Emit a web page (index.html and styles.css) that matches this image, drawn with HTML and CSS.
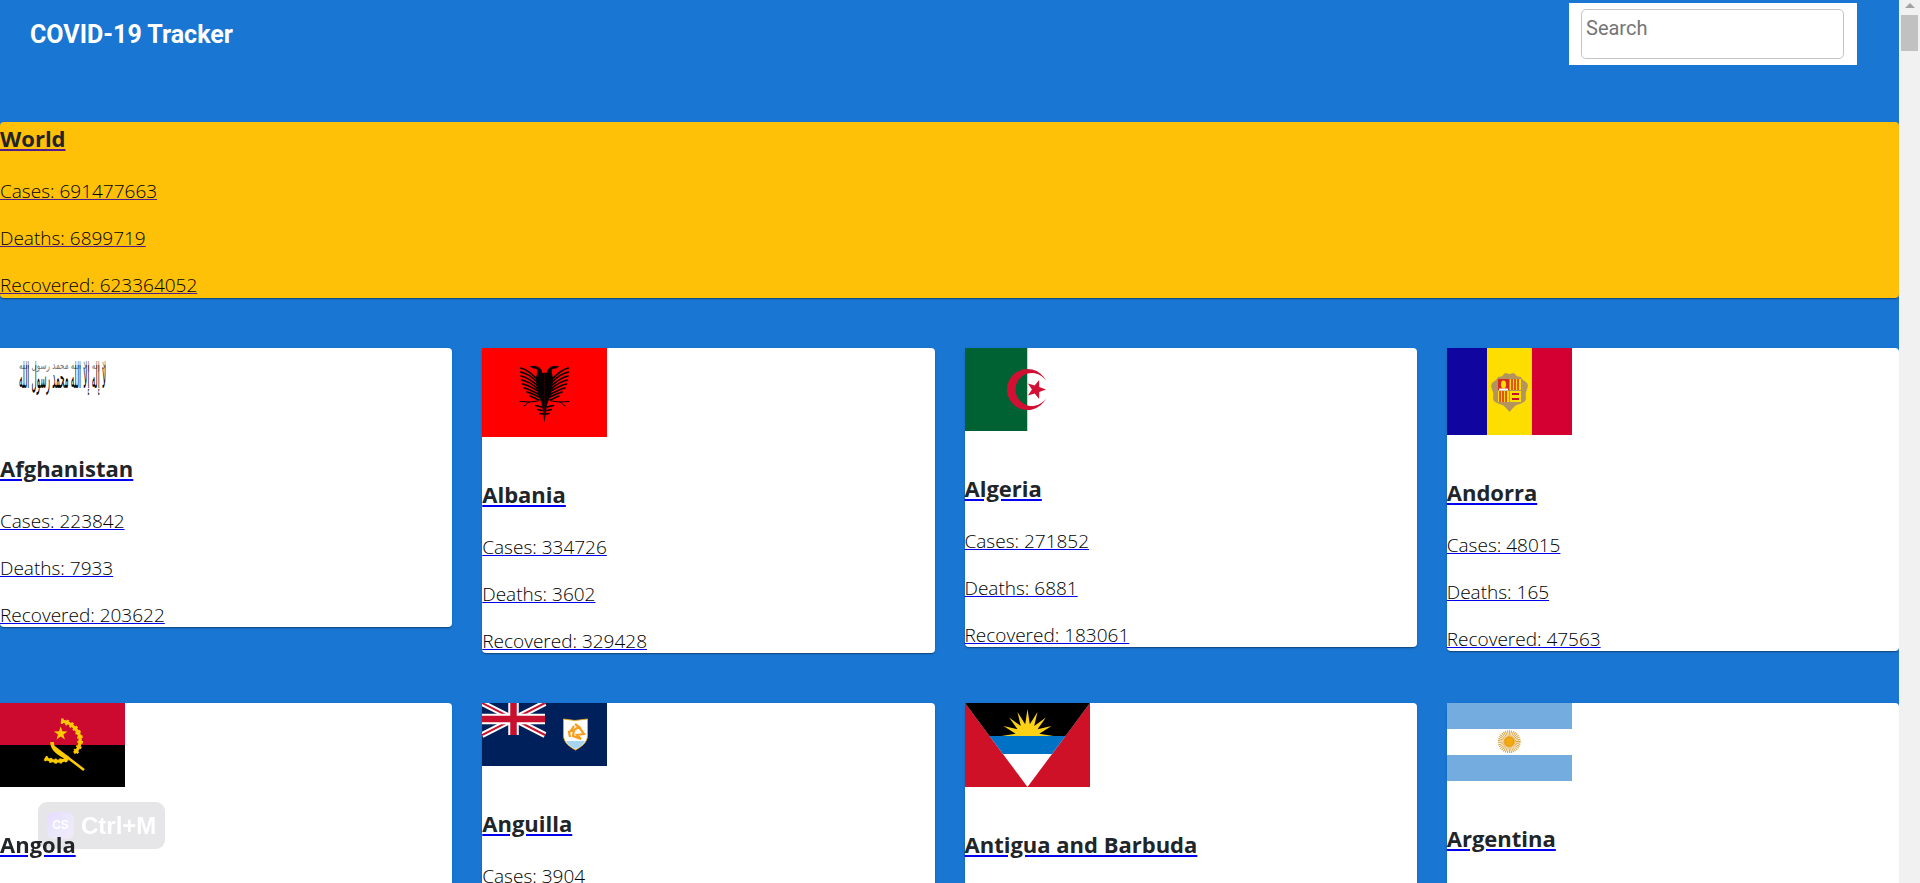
FILE: index.html
```html
<!DOCTYPE html>
<html lang="en">
<head>
<meta charset="utf-8">
<title>COVID-19 Tracker</title>
<link rel="stylesheet" href="styles.css">
</head>
<body>
<div class="app">
<main class="page">
  <header class="topbar">
    <h1 class="brand">COVID-19 Tracker</h1>
    <div class="search-box"><input class="search-input" type="text" placeholder="Search"></div>
  </header>

  <a class="card world" href="#world">
    <h3 class="name">World</h3>
    <p class="stat">Cases: 691477663</p>
    <p class="stat">Deaths: 6899719</p>
    <p class="stat">Recovered: 623364052</p>
  </a>

  <section class="grid">
    <a class="card" href="#af">
      <svg class="flag" viewBox="0 0 125 62.5" width="125" height="62.5"><rect width="125" height="62.5" fill="#fff"/><text class="shahada-small" x="19" y="21" textLength="87" lengthAdjust="spacingAndGlyphs">لا إله إلا الله محمد رسول الله</text><text class="shahada" x="19" y="40" textLength="87" lengthAdjust="spacingAndGlyphs">لا إله إلا الله محمد رسول الله</text></svg>
      <h3 class="name">Afghanistan</h3>
      <p class="stat">Cases: 223842</p>
      <p class="stat">Deaths: 7933</p>
      <p class="stat">Recovered: 203622</p>
    </a>

    <a class="card" href="#al">
      <svg class="flag" viewBox="0 0 125 89" width="125" height="89">
        <rect width="125" height="89" fill="#f00"/>
        <g id="eagle-half" fill="#000" stroke="#000" stroke-linecap="round">
          <path d="M62.5 25 L60 25 C60 21 57 18.5 52 18 L48 18.5 L50.5 20 L55 21 C56 24 55 27 54 30 L56 46 L60 56 L62.5 73 Z" stroke-width="0.3"/>
          <path d="M55 31 C50 26 44 21 38.5 20" stroke-width="1.7" fill="none"/>
          <path d="M55 34 C50 29 44 25 38.5 24" stroke-width="1.7" fill="none"/>
          <path d="M55 37 C50 33 44 29 39 28" stroke-width="1.7" fill="none"/>
          <path d="M55 40 C50 36 45 33 39.5 32" stroke-width="1.7" fill="none"/>
          <path d="M56 43 C51 40 46 37 40.5 36" stroke-width="1.7" fill="none"/>
          <path d="M56 46 C52 44 47 41 42 40" stroke-width="1.7" fill="none"/>
          <path d="M57 49 C53 47 49 45 45 44" stroke-width="1.7" fill="none"/>
          <path d="M57 52 C54 51 51 49 48 48" stroke-width="1.5" fill="none"/>
          <path d="M56 53 L48 54 L38 53.5" stroke-width="1" fill="none"/>
          <path d="M47 54 L42 58" stroke-width="1" fill="none"/>
          <path d="M60 59 L53.5 57.5" stroke-width="1.4" fill="none"/>
          <path d="M60 62.5 L55.5 61.5" stroke-width="1.4" fill="none"/>
          <path d="M61 66 L58 65.5" stroke-width="1.4" fill="none"/>
        </g>
        <use href="#eagle-half" transform="matrix(-1 0 0 1 125 0)"/>
      </svg>
      <h3 class="name">Albania</h3>
      <p class="stat">Cases: 334726</p>
      <p class="stat">Deaths: 3602</p>
      <p class="stat">Recovered: 329428</p>
    </a>

    <a class="card" href="#dz">
      <svg class="flag" viewBox="0 0 125 83" width="125" height="83">
        <rect width="62.5" height="83" fill="#006233"/>
        <rect x="62.5" width="62.5" height="83" fill="#fff"/>
        <path d="M81.19 33.08A20.5 20.5 0 1 0 81.19 49.92A16.5 16.5 0 1 1 81.19 33.08Z" fill="#d21034"/>
        <path d="M81 41.5L74.3 43.9L74.1 51L69.7 45.4L62.9 47.4L66.9 41.5L62.9 35.6L69.7 37.6L74.1 32L74.3 39.1Z" fill="#d21034"/>
      </svg>
      <h3 class="name">Algeria</h3>
      <p class="stat">Cases: 271852</p>
      <p class="stat">Deaths: 6881</p>
      <p class="stat">Recovered: 183061</p>
    </a>

    <a class="card" href="#ad">
      <svg class="flag" viewBox="0 0 125 87" width="125" height="87">
        <rect width="40" height="87" fill="#10069f"/>
        <rect x="40" width="45" height="87" fill="#fedd00"/>
        <rect x="85" width="40" height="87" fill="#d50032"/>
        <path d="M51 29C54 29 56 28 57 26C59 24 60 26 62.5 26C65 26 66 24 68 26C69 28 71 29 74 29C75 32 78 33 80 35C82 38 80 41 79 44C78 47 80 50 78 53C75 56 71 56 68 58C66 60 64 62 62.5 64C61 62 59 60 57 58C54 56 50 56 47 53C45 50 47 47 46 44C45 41 43 38 45 35C47 33 50 32 51 29Z" fill="#b3945f"/>
        <rect x="51" y="31" width="11" height="11" fill="#d52b1e"/>
        <ellipse cx="56.5" cy="36.5" rx="2.6" ry="4" fill="#fedd00"/>
        <rect x="52" y="40.5" width="9" height="2" fill="#fff"/>
        <rect x="63" y="31" width="11" height="11" fill="#fedd00"/>
        <path d="M65 31V42M68 31V42M71 31V42" stroke="#d52b1e" stroke-width="1.5"/>
        <rect x="51" y="43" width="11" height="11" fill="#fedd00"/>
        <path d="M53 43V54M56 43V54M59 43V54" stroke="#d52b1e" stroke-width="1.5"/>
        <rect x="63" y="43" width="11" height="11" fill="#fedd00"/>
        <path d="M65 46H72M65 51H72" stroke="#c8102e" stroke-width="2.2"/>
      </svg>
      <h3 class="name">Andorra</h3>
      <p class="stat">Cases: 48015</p>
      <p class="stat">Deaths: 165</p>
      <p class="stat">Recovered: 47563</p>
    </a>

    <a class="card open" href="#ao">
      <svg class="flag" viewBox="0 0 125 84" width="125" height="84">
        <rect width="125" height="42" fill="#cc092f"/>
        <rect y="42" width="125" height="42" fill="#000"/>
        <path d="M61 18C72 19 82 30 80 40C79 45 77 48 74 50" fill="none" stroke="#ffcb00" stroke-width="3.2"/>
        <path d="M61 18C72 19 82 30 80 40C79 45 77 48 74 50" fill="none" stroke="#ffcb00" stroke-width="5.6" stroke-dasharray="2.4 2.6"/>
        <path d="M45 55C52 59 60 59 68 56" fill="none" stroke="#ffcb00" stroke-width="3"/>
        <path d="M45 55C52 59 60 59 68 56" fill="none" stroke="#ffcb00" stroke-width="5" stroke-dasharray="2.4 2.6"/>
        <path d="M52 39C52 45 58 51 68 55" fill="none" stroke="#ffcb00" stroke-width="3.6"/>
        <path d="M54 44L84 67" stroke="#ffcb00" stroke-width="2.6"/>
        <path d="M60.7 23.5L62.4 28.3L67.5 28.4L63.4 31.5L64.9 36.4L60.7 33.5L56.5 36.4L58 31.5L53.9 28.4L59 28.3Z" fill="#ffcb00"/>
      </svg>
      <h3 class="name">Angola</h3>
    </a>

    <a class="card open" href="#ai">
      <svg class="flag" viewBox="0 0 125 63" width="125" height="63">
        <rect width="125" height="63" fill="#00205b"/>
        <path d="M0 0L63 32M63 0L0 32" stroke="#fff" stroke-width="6"/>
        <path d="M0 0L63 32M63 0L0 32" stroke="#c8102e" stroke-width="2"/>
        <path d="M31.5 0V32M0 16H63" stroke="#fff" stroke-width="10.5"/>
        <path d="M31.5 0V32M0 16H63" stroke="#c8102e" stroke-width="6.5"/>
        <path d="M81.5 16L93 17.5L105.5 16L105.5 33C105 40 99 44 93.5 47C88 44 82 40 81.5 33Z" fill="#fff" stroke="#e6a817" stroke-width="0.9"/>
        <path d="M84 38H103C101 42 97 44.5 93.5 46C90 44.5 86 42 84 38Z" fill="#a6d4f5"/>
        <path d="M93 21L97 24L92 27L87 29L88 34M97 24L102 31L95 32L99 36L91 33L92 27M88 29L92 23" fill="none" stroke="#f99d1c" stroke-width="2.2"/>
      </svg>
      <h3 class="name">Anguilla</h3>
      <p class="stat">Cases: 3904</p>
    </a>

    <a class="card open" href="#ag">
      <svg class="flag" viewBox="0 0 125 84" width="125" height="84">
        <rect width="125" height="84" fill="#ce1126"/>
        <path d="M0 0H125L62.5 84Z" fill="#fff"/>
        <path d="M0 0H125L100.5 33H24.5Z" fill="#000"/>
        <path d="M24.5 33H100.5L87 51H38Z" fill="#0072c6"/>
        <path d="M88.5 33L74.3 30.7L86.5 23L72.5 26.3L80.9 14.6L69.2 23L72.5 9L64.8 21.2L62.5 6L60.2 21.2L52.5 9L55.8 23L44.1 14.6L52.5 26.3L38.5 23L50.7 30.7L36.5 33Z" fill="#fcd116"/>
      </svg>
      <h3 class="name">Antigua and Barbuda</h3>
    </a>

    <a class="card open" href="#ar">
      <svg class="flag" viewBox="0 0 125 78" width="125" height="78">
        <rect width="125" height="78" fill="#74acdf"/>
        <rect y="26" width="125" height="26" fill="#fff"/>
        <circle cx="62.3" cy="38.7" r="8.6" fill="none" stroke="#d9a441" stroke-width="5.6" stroke-dasharray="0.9 0.7"/>
        <circle cx="62.3" cy="38.7" r="6" fill="#f0b544"/>
        <circle cx="62.3" cy="38.7" r="4.4" fill="#f6a90e" stroke="#c98412" stroke-width="0.5"/>
      </svg>
      <h3 class="name">Argentina</h3>
    </a>
  </section>
</main>

<aside class="scrollbar" aria-hidden="true">
  <span class="scroll-up"></span>
  <span class="scroll-thumb"></span>
</aside>
</div>

<div class="shortcut">
  <span class="shortcut-icon">CS</span>
  <span class="shortcut-text">Ctrl+M</span>
</div>
</body>
</html>
```

FILE: styles.css
```css
* { box-sizing: border-box; }

html, body {
  margin: 0;
  height: 100%;
  overflow: hidden;
}

body {
  background: #1976d2;
  font-family: "Open Sans", "Noto Sans", sans-serif;
  color: #212529;
}

.app {
  display: flex;
  height: 100vh;
}

.page {
  flex: 1;
  min-width: 0;
  overflow: hidden;
}

.topbar {
  display: flex;
  justify-content: space-between;
  align-items: flex-start;
  height: 122px;
  padding: 3px 42px 0 30px;
}

.brand {
  margin: 14px 0 0;
  font-family: Roboto, sans-serif;
  font-size: 25px;
  font-weight: 700;
  line-height: 35px;
  color: #fff;
}

.search-box {
  width: 288px;
  height: 62px;
  padding: 6px 13px 6px 12px;
  background: #fff;
}

.search-input {
  display: block;
  width: 100%;
  height: 50px;
  padding: 0 4px 13px;
  border: 1px solid #c4c4c4;
  border-radius: 5px;
  font-family: Roboto, sans-serif;
  font-size: 20px;
  outline: none;
}

.search-input::placeholder {
  color: #757575;
  opacity: 1;
}

.card {
  display: block;
  background: #fff;
  border-radius: 4px;
  color: #00e;
  box-shadow: 0 2px 1px -1px rgba(0,0,0,.2), 0 1px 1px rgba(0,0,0,.14), 0 1px 3px rgba(0,0,0,.12);
}

.world {
  background: #ffc107;
  color: #551a8b;
  height: 176px;
}

.open {
  min-height: 240px;
}

.grid {
  display: grid;
  grid-template-columns: repeat(4, 1fr);
  column-gap: 30px;
  row-gap: 50px;
  align-items: start;
  margin-top: 50px;
}

.flag {
  display: block;
  margin-bottom: 41px;
}

.shahada,
.shahada-small {
  font-family: "DejaVu Sans", sans-serif;
  fill: #000;
}

.shahada {
  font-size: 30px;
}

.shahada-small {
  font-size: 11px;
  fill: #777;
}

.name {
  position: relative;
  z-index: 2;
  margin: 0 0 25px;
  font-size: 22px;
  font-weight: 700;
  line-height: 32px;
  color: #212529;
}

.stat {
  margin: 0 0 23px;
  font-size: 19px;
  font-weight: 300;
  line-height: 24px;
  color: #000;
}

.stat:last-child {
  margin-bottom: 0;
}

.scrollbar {
  flex: 0 0 21px;
  position: relative;
  background: #f1f1f1;
  padding: 15px 2px 0;
}

.scroll-up {
  position: absolute;
  top: 3px;
  left: 6px;
  border-left: 5px solid transparent;
  border-right: 5px solid transparent;
  border-bottom: 5px solid #a3a3a3;
}

.scroll-thumb {
  display: block;
  height: 36px;
  background: #c1c1c1;
}

.shortcut {
  position: fixed;
  z-index: 1;
  left: 38px;
  top: 802px;
  width: 127px;
  height: 47px;
  display: flex;
  align-items: center;
  gap: 7px;
  padding-left: 9px;
  border-radius: 9px;
  background: rgba(205,205,210,.5);
}

.shortcut-icon {
  width: 27px;
  height: 27px;
  border-radius: 7px;
  background: linear-gradient(135deg, #e6dcff, #ebe9fb 60%, #f3e9f7);
  color: #fff;
  font-family: "Liberation Sans", sans-serif;
  font-size: 12px;
  font-weight: 700;
  line-height: 27px;
  text-align: center;
}

.shortcut-text {
  font-family: "Liberation Sans", sans-serif;
  font-size: 24px;
  font-weight: 700;
  color: #fff;
}
```
